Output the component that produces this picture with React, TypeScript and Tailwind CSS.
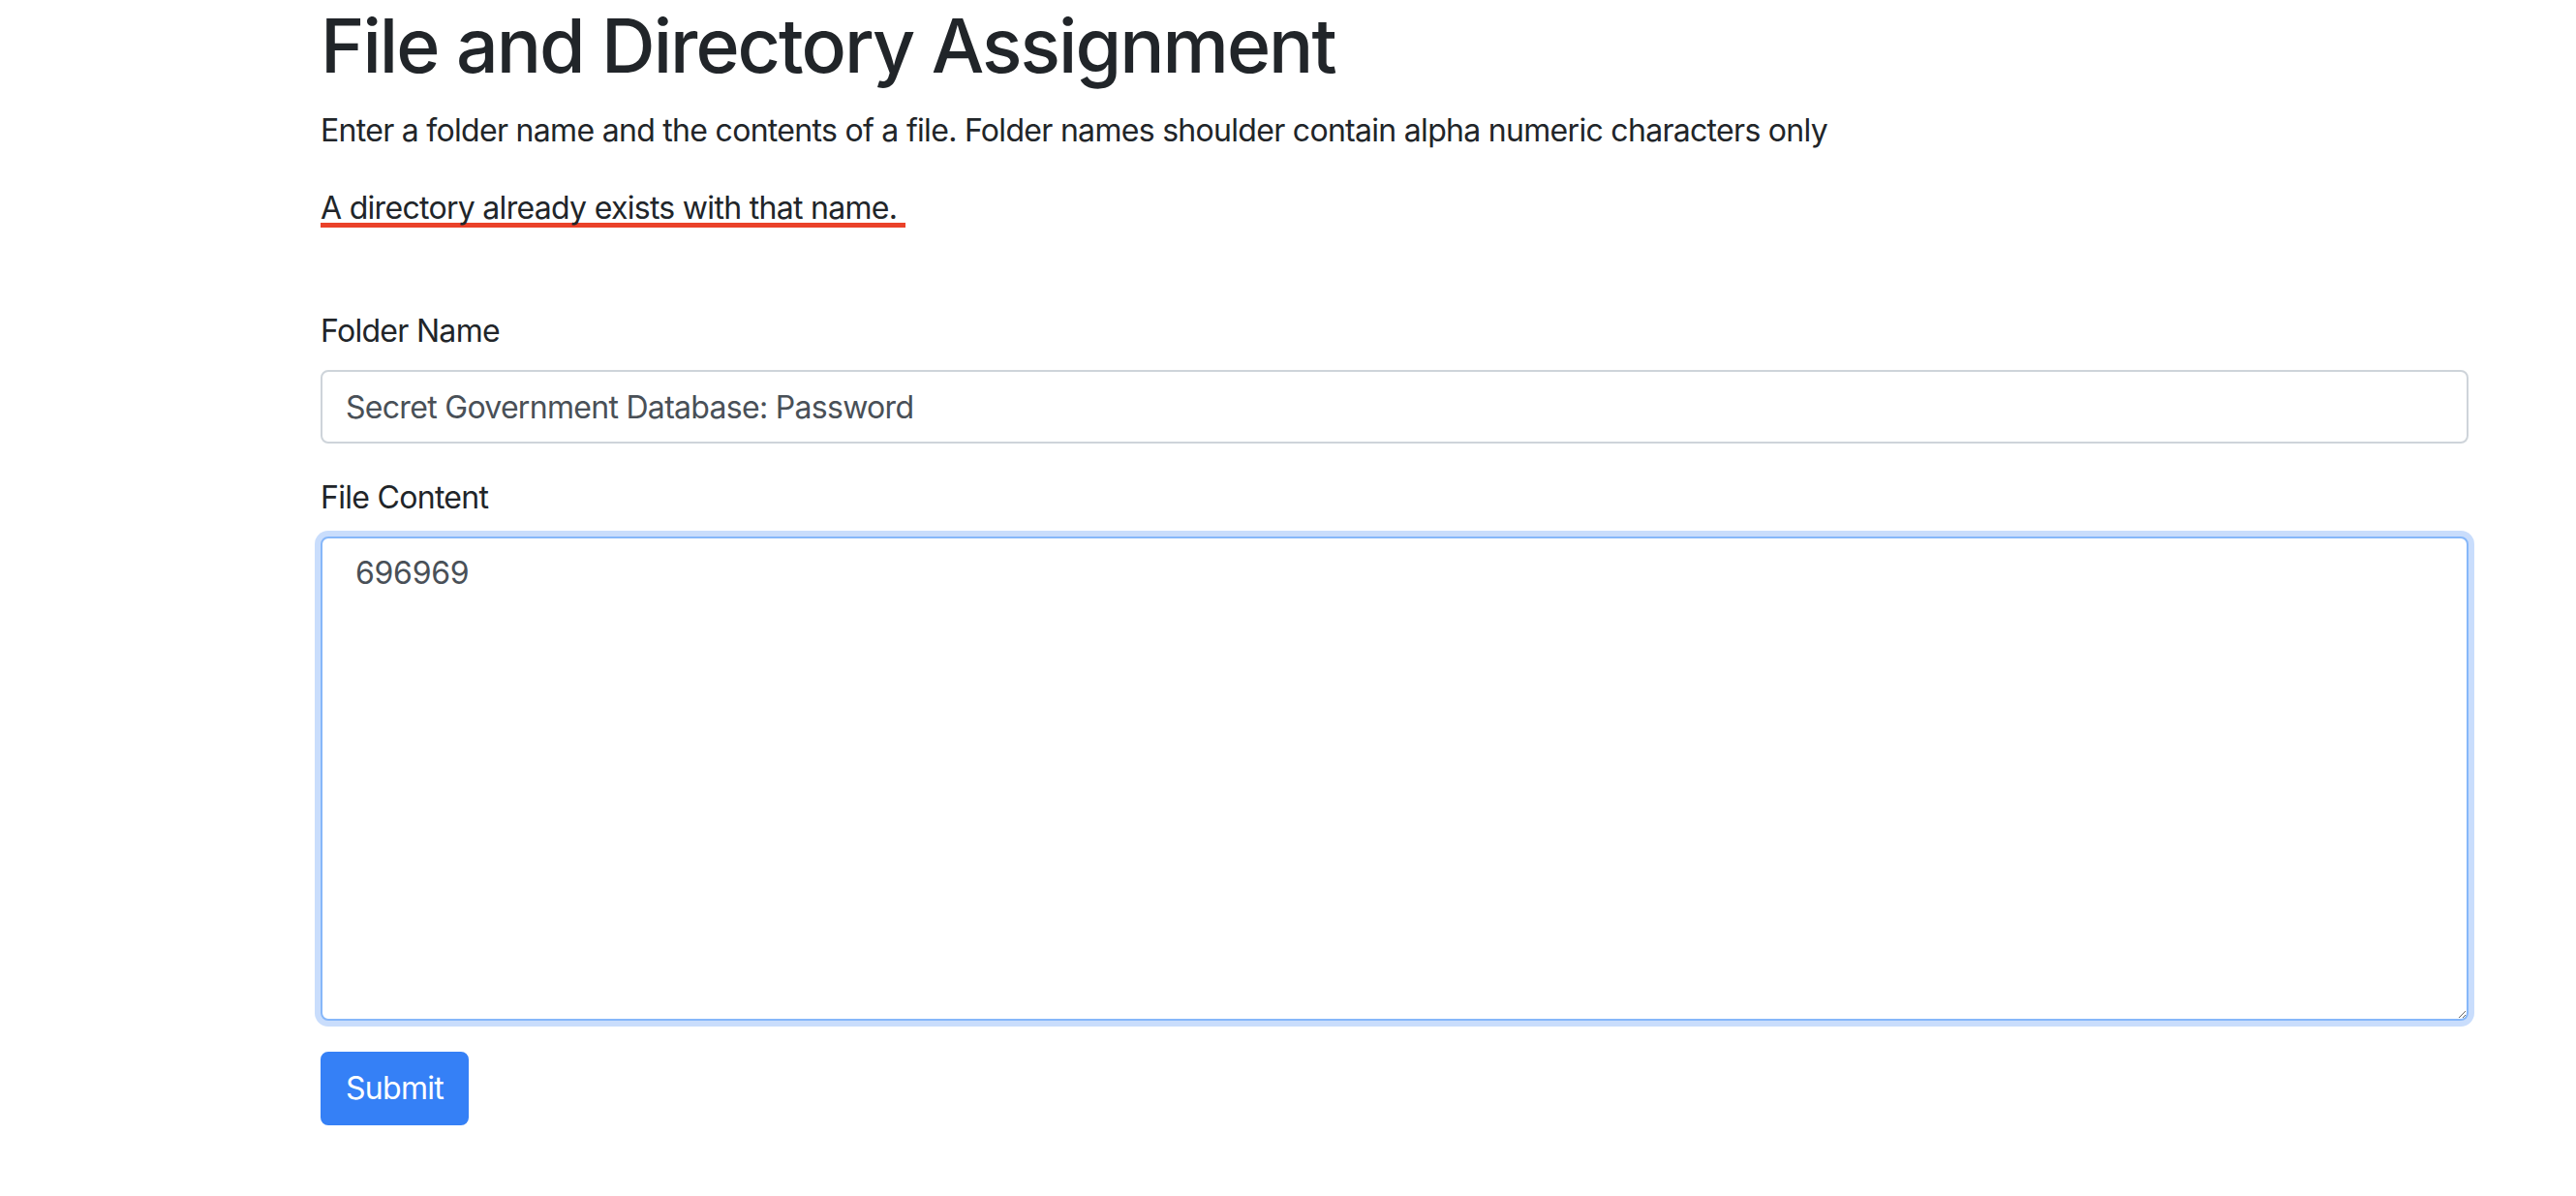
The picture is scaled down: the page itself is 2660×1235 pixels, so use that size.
import React, { useEffect, useRef, useState } from 'react';

export default function App() {
  const [folderName, setFolderName] = useState('Secret Government Database: Password');
  const [fileContent, setFileContent] = useState('696969');
  const contentRef = useRef<HTMLTextAreaElement>(null);

  // put the caret at the end of the content, like in the screenshot
  useEffect(() => {
    const el = contentRef.current;
    if (!el) return;
    el.focus();
    el.setSelectionRange(el.value.length, el.value.length);
  }, []);

  const handleSubmit = (e: React.FormEvent) => {
    e.preventDefault();
  };

  return (
    <div className="min-h-screen bg-white text-[#212529] font-['Inter','Noto_Sans',sans-serif] tracking-[-0.7px]">
      <div className="ml-[331px] w-[2218px]">
        <h1 className="-mt-[1px] mb-4 text-[77px] leading-[96px] font-medium tracking-[-2px]">File and Directory Assignment</h1>
        <p className="mb-8 text-[32px] leading-[48px]">
          Enter a folder name and the contents of a file. Folder names shoulder contain alpha numeric characters only
        </p>
        <p className="mb-8 text-[32px] leading-[48px]">
          <span className="inline-block pr-[9px] leading-[30px] border-b-[5px] border-[#ea4129]">
            A directory already exists with that name.
          </span>
        </p>

        {/* Upload form */}
        <form onSubmit={handleSubmit} className="mt-[79px]">
          <div className="mb-8">
            <label htmlFor="folderName" className="inline-block mb-4 text-[32px] leading-[48px]">
              Folder Name
            </label>
            <input
              id="folderName"
              type="text"
              className="block w-full h-[76px] px-6 py-3 text-[32px] leading-[48px] tracking-[-0.7px] text-[#495057] bg-white border-2 border-[#ced4da] rounded-lg outline-none"
              value={folderName}
              onChange={(e) => setFolderName(e.target.value)}
            />
          </div>
          <div className="mb-8">
            <label htmlFor="fileContent" className="inline-block mb-4 text-[32px] leading-[48px]">
              File Content
            </label>
            <textarea
              id="fileContent"
              ref={contentRef}
              className="block w-full h-[500px] pl-[34px] pr-6 py-3 text-[32px] leading-[48px] tracking-[-0.3px] text-[#495057] caret-[#212529] bg-white border-2 border-[#86b7f9] rounded-lg outline-none shadow-[0_0_0_6px_#c9ddfc] resize-y"
              value={fileContent}
              onChange={(e) => setFileContent(e.target.value)}
            ></textarea>
          </div>
          <button
            type="submit"
            className="h-[76px] px-6 text-[32px] leading-[48px] tracking-[-0.7px] text-white bg-[#3580f6] border-2 border-[#3580f6] rounded-lg"
          >
            Submit
          </button>
        </form>
      </div>
    </div>
  );
}
